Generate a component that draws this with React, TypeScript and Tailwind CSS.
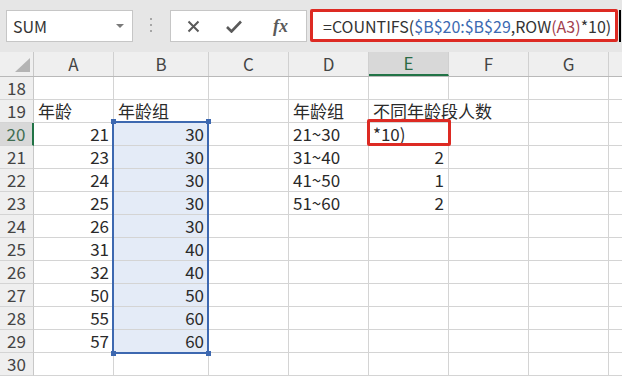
import React from 'react';

// column widths incl. right border: row header, A..G, H (partial)
const COLS = ['w-[34px]', 'w-[80px]', 'w-[95px]', 'w-[80px]', 'w-[80px]', 'w-[80px]', 'w-[80px]', 'w-[80px]', 'w-[14px]'];
const LETTERS = ['', 'A', 'B', 'C', 'D', 'E', 'F', 'G', ''];

type Cell = { v?: string; left?: boolean; noRight?: boolean };

const ROWS: { n: number; cells: Cell[] }[] = [
  { n: 18, cells: [] },
  { n: 19, cells: [{ v: '年龄', left: true }, { v: '年龄组', left: true }, {}, { v: '年龄组', left: true }, { v: '不同年龄段人数', left: true, noRight: true }] },
  { n: 20, cells: [{ v: '21' }, { v: '30' }, {}, { v: '21~30', left: true }, { v: '*10)', left: true }] },
  { n: 21, cells: [{ v: '23' }, { v: '30' }, {}, { v: '31~40', left: true }, { v: '2' }] },
  { n: 22, cells: [{ v: '24' }, { v: '30' }, {}, { v: '41~50', left: true }, { v: '1' }] },
  { n: 23, cells: [{ v: '25' }, { v: '30' }, {}, { v: '51~60', left: true }, { v: '2' }] },
  { n: 24, cells: [{ v: '26' }, { v: '30' }] },
  { n: 25, cells: [{ v: '31' }, { v: '40' }] },
  { n: 26, cells: [{ v: '32' }, { v: '40' }] },
  { n: 27, cells: [{ v: '50' }, { v: '50' }] },
  { n: 28, cells: [{ v: '55' }, { v: '60' }] },
  { n: 29, cells: [{ v: '57' }, { v: '60' }] },
  { n: 30, cells: [] },
];

function Toolbar() {
  return (
    <div className="flex h-[52px] items-start bg-[#e6e6e6] pl-[6px] pt-[10px]">
      {/* Name box */}
      <div className="flex h-[32px] w-[127px] shrink-0 items-center justify-between border border-[#c6c6c6] bg-white pl-[6px] pr-[8px]">
        <span className="text-[16px] text-[#333]">SUM</span>
        <svg width="8" height="4" viewBox="0 0 8 4">
          <path d="M0 0h8L4 4z" fill="#7a7a7a" />
        </svg>
      </div>

      {/* Grip */}
      <div className="ml-[17px] mt-[8px] flex shrink-0 flex-col gap-[4px]">
        <span className="block h-[2px] w-[2px] bg-[#a6a6a6]" />
        <span className="block h-[2px] w-[2px] bg-[#a6a6a6]" />
        <span className="block h-[2px] w-[2px] bg-[#a6a6a6]" />
      </div>

      {/* Cancel / enter / fx */}
      <div className="ml-[18px] flex h-[32px] w-[137px] shrink-0 items-center border border-[#c6c6c6] bg-white">
        <svg className="ml-[16px]" width="13" height="13" viewBox="0 0 13 13">
          <path d="M1.5 1.5l10 10M11.5 1.5l-10 10" stroke="#5a5a5a" strokeWidth="2" />
        </svg>
        <svg className="ml-[26px]" width="16" height="13" viewBox="0 0 16 13">
          <path d="M1 7l4.5 4.5L15 1.5" stroke="#5a5a5a" strokeWidth="2.6" fill="none" />
        </svg>
        <span className="ml-[31px] font-['Liberation_Serif',serif] text-[18px] font-bold italic text-[#5a5a5a]">fx</span>
      </div>

      {/* Formula, highlighted */}
      <div className="-mt-[1px] ml-[3px] flex h-[33px] w-[308px] shrink-0 items-center overflow-hidden rounded-[2px] border-[3px] border-[#dd2a23] bg-white pl-[10px] text-[16px] whitespace-nowrap text-[#333]">
        <span>=COUNTIFS(</span>
        <span className="text-[#3c6ab2]">$B$20:$B$29</span>
        <span>,ROW</span>
        <span className="text-[#a2404d]">(A3)</span>
        <span>*10)</span>
      </div>
      <div className="ml-[1px] h-[32px] w-[2px] shrink-0 bg-black" />
    </div>
  );
}

function HeaderRow() {
  return (
    <div className="flex h-[25px] border-b border-[#b9b9b9] bg-[#efefef]">
      {COLS.map((w, i) => {
        if (i === 0) {
          return (
            <div key={i} className={`${w} flex shrink-0 items-end justify-end border-r border-[#c8c8c8] pb-[4px] pr-[3px]`}>
              <svg width="15" height="14" viewBox="0 0 15 14">
                <path d="M15 0V14H0z" fill="#b4b4b4" />
              </svg>
            </div>
          );
        }
        const sel = i === 5;
        return (
          <div
            key={i}
            className={`${w} flex shrink-0 items-center justify-center border-r border-[#d0d0d0] text-[17px] ${
              sel ? 'border-b-2 border-b-[#217346] bg-[#d8d8d8] text-[#2a6b45]' : 'text-[#444]'
            }`}
          >
            {LETTERS[i]}
          </div>
        );
      })}
    </div>
  );
}

function Row({ n, cells }: { n: number; cells: Cell[] }) {
  const selRow = n === 20;
  return (
    <div className="flex h-[23px]">
      <div
        className={`${COLS[0]} flex shrink-0 items-center justify-center border-b border-[#d4d4d4] text-[17px] ${
          selRow ? 'border-r-2 border-r-[#217346] bg-[#d8d8d8] text-[#3f6d52]' : 'border-r border-r-[#c8c8c8] bg-[#efefef] text-[#444]'
        }`}
      >
        {n}
      </div>
      {COLS.slice(1).map((w, j) => {
        const c = cells[j] || {};
        const blue = j === 1 && n >= 20 && n <= 29;
        return (
          <div
            key={j}
            className={`${w} flex shrink-0 items-center whitespace-nowrap border-b border-[#d4d4d4] text-[17px] text-[#2a2a2a] ${
              c.noRight ? '' : 'border-r'
            } ${c.left ? 'justify-start pl-[4px]' : 'justify-end pr-[4px]'} ${blue ? 'bg-[#e4ebf7]' : ''}`}
          >
            {c.v}
          </div>
        );
      })}
    </div>
  );
}

export default function App() {
  return (
    <div className="relative h-[377px] w-[622px] overflow-hidden bg-white font-['Noto_Sans_CJK_SC','Noto_Sans',sans-serif]">
      <Toolbar />
      <HeaderRow />
      {ROWS.map((r) => (
        <Row key={r.n} n={r.n} cells={r.cells} />
      ))}

      {/* B20:B29 reference highlight */}
      <div className="absolute left-[112px] top-[121px] h-[233px] w-[97px] border-2 border-[#3d68b0]" />
      <span className="absolute left-[111px] top-[119px] h-[5px] w-[5px] bg-[#3d68b0]" />
      <span className="absolute left-[206px] top-[119px] h-[5px] w-[5px] bg-[#3d68b0]" />
      <span className="absolute left-[111px] top-[351px] h-[5px] w-[5px] bg-[#3d68b0]" />
      <span className="absolute left-[206px] top-[351px] h-[5px] w-[5px] bg-[#3d68b0]" />

      {/* E20 edit highlight */}
      <div className="absolute left-[367px] top-[119px] h-[27px] w-[84px] rounded-[2px] border-[3px] border-[#dd2a23]" />
    </div>
  );
}
